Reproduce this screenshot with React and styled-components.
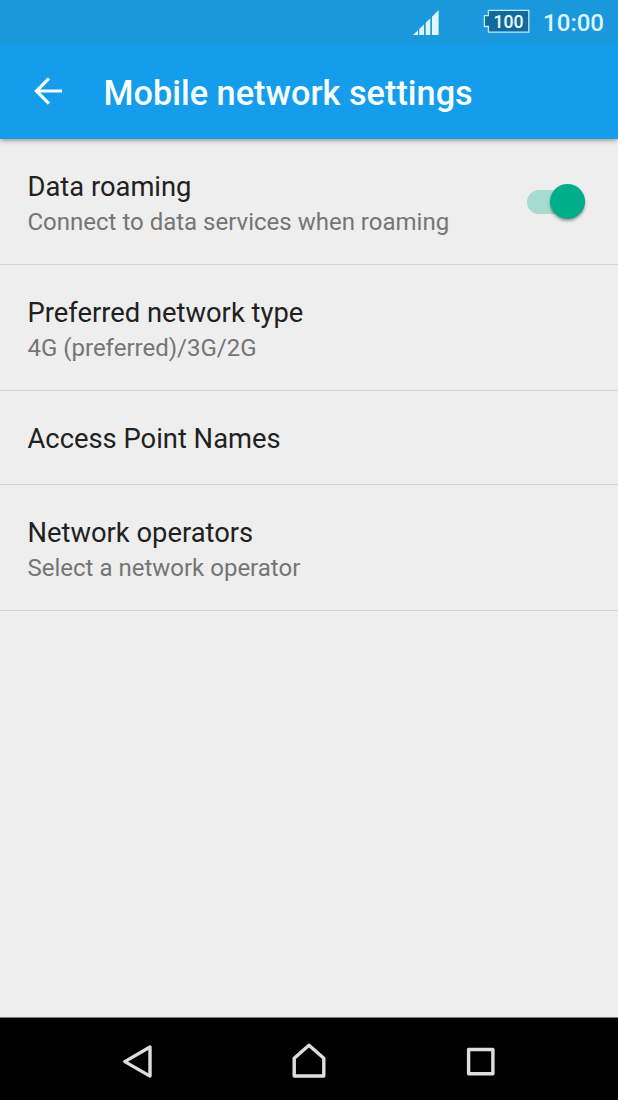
import React, { useState } from "react";
import styled, { createGlobalStyle } from "styled-components";

const GlobalStyle = createGlobalStyle`
  * {
    box-sizing: border-box;
  }
  body {
    margin: 0;
    background: #eeeeee;
    font-family: Roboto, "Liberation Sans", sans-serif;
  }
`;

const settings = [
  {
    title: "Data roaming",
    summary: "Connect to data services when roaming",
    hasSwitch: true,
  },
  { title: "Preferred network type", summary: "4G (preferred)/3G/2G" },
  { title: "Access Point Names" },
  { title: "Network operators", summary: "Select a network operator" },
];

function App() {
  const [roaming, setRoaming] = useState(true);

  return (
    <>
      <GlobalStyle />
      <Screen>
        <StatusBar>
          <Signal viewBox="0 0 26 25">
            <path d="M0 25L5 20.2V25ZM6.3 25V18.9L11 14.4V25ZM12.7 25V12.8L17.3 8.3V25ZM19 25V6.7L25.6 0V25Z" />
          </Signal>
          <Battery viewBox="0 0 47 25">
            <path d="M5.4 1.4H45.8V23.1H5.4V17.5H1.4V6.6H5.4Z" />
            <text x="25.6" y="18.6" textAnchor="middle">
              100
            </text>
          </Battery>
          <Clock>10:00</Clock>
        </StatusBar>
        <AppBar>
          <BackArrow viewBox="0 0 28 28">
            <path d="M15 1.4L2.4 14L15 26.6M2.4 14H28" />
          </BackArrow>
          <Heading>Mobile network settings</Heading>
        </AppBar>
        <List>
          {settings.map(({ title, summary, hasSwitch }) => (
            <Row key={title} $single={!summary}>
              <RowText>
                <RowTitle>{title}</RowTitle>
                {summary && <Summary>{summary}</Summary>}
              </RowText>
              {hasSwitch && (
                <Track
                  role="switch"
                  aria-checked={roaming}
                  $on={roaming}
                  onClick={() => setRoaming(!roaming)}
                >
                  <Thumb $on={roaming} />
                </Track>
              )}
            </Row>
          ))}
        </List>
        <NavBar>
          <NavIcon viewBox="0 0 40 40">
            <path d="M7.8 19.6L33 5V34.1Z" />
          </NavIcon>
          <NavIcon viewBox="0 0 40 40">
            <path d="M5.2 34V16.2L20 3.2L34.8 16.2V34Z" />
          </NavIcon>
          <NavIcon viewBox="0 0 40 40">
            <path d="M7.6 7.5H31.9V31.8H7.6Z" />
          </NavIcon>
        </NavBar>
      </Screen>
    </>
  );
}

export default App;
//

/** Page and bars */
const Screen = styled.div`
  width: 100%;
  height: 100vh;
  display: flex;
  flex-direction: column;
  background: #eeeeee;
`;

const StatusBar = styled.header`
  height: 43px;
  display: flex;
  align-items: flex-start;
  justify-content: flex-end;
  padding: 0 14px 0 0;
  background: #1b97dc;
  position: relative;
  z-index: 2;
`;

const Signal = styled.svg`
  width: 26px;
  height: 25px;
  margin: 10px 44px 0 0;
  fill: #e0f7ff;
`;

const Battery = styled.svg`
  width: 47px;
  height: 25px;
  margin: 9px 13px 0 0;

  path {
    fill: #126a9c;
    stroke: #b9ebfb;
    stroke-width: 1.3;
  }
  text {
    fill: #f0fcff;
    font-size: 17.6px;
    font-weight: 500;
  }
`;

const Clock = styled.span`
  margin-top: 9px;
  font-size: 24px;
  font-weight: 500;
  line-height: 28px;
  color: #dcf5ff;
`;

const AppBar = styled.div`
  height: 96px;
  display: flex;
  align-items: center;
  padding: 0 34px;
  background: linear-gradient(#1899e3, #159deb 3px);
  box-shadow: 0 1px 5px rgba(0, 0, 0, 0.45);
  z-index: 1;
`;

const BackArrow = styled.svg`
  width: 28px;
  height: 28px;
  margin-right: 41.5px;
  fill: none;
  stroke: #f4feff;
  stroke-width: 3.2;
`;

const Heading = styled.h1`
  margin: 3px 0 0;
  font-size: 34.3px;
  font-weight: 500;
  line-height: 40px;
  color: #f7ffff;
  white-space: nowrap;
`;
//

/** Settings list */
const List = styled.main`
  flex: 1;
`;

const Row = styled.div`
  height: ${(props) => (props.$single ? "94px" : "126px")};
  display: flex;
  align-items: center;
  justify-content: space-between;
  padding: 0 33.5px 0 27.5px;
  border-bottom: 1px solid #d2d2d2;
`;

const RowText = styled.div`
  padding-top: 2px;
`;

const RowTitle = styled.div`
  font-size: 27.35px;
  line-height: 36px;
  color: #212121;
`;

const Summary = styled.div`
  margin-bottom: -3px;
  font-size: 24px;
  line-height: 34px;
  color: #757575;
`;

const Track = styled.div`
  width: 58px;
  height: 24px;
  display: flex;
  align-items: center;
  justify-content: ${(props) => (props.$on ? "flex-end" : "flex-start")};
  border-radius: 12px;
  background: ${(props) => (props.$on ? "#a6dccf" : "#b9b9b9")};
`;

const Thumb = styled.div`
  width: 35px;
  height: 35px;
  border-radius: 50%;
  background: ${(props) => (props.$on ? "#00ad8a" : "#f1f1f1")};
  box-shadow: 0 2px 3px rgba(0, 0, 0, 0.35);
`;
//

/** Navigation keys at the bottom */
const NavBar = styled.nav`
  height: 83px;
  display: flex;
  align-items: center;
  justify-content: center;
  gap: 132px;
  padding-top: 5px;
  border-top: 1px solid #7a7a7a;
  background: #000000;
`;

const NavIcon = styled.svg`
  width: 40px;
  height: 40px;
  fill: none;
  stroke: #dedede;
  stroke-width: 3.4;
  stroke-linejoin: round;
`;
